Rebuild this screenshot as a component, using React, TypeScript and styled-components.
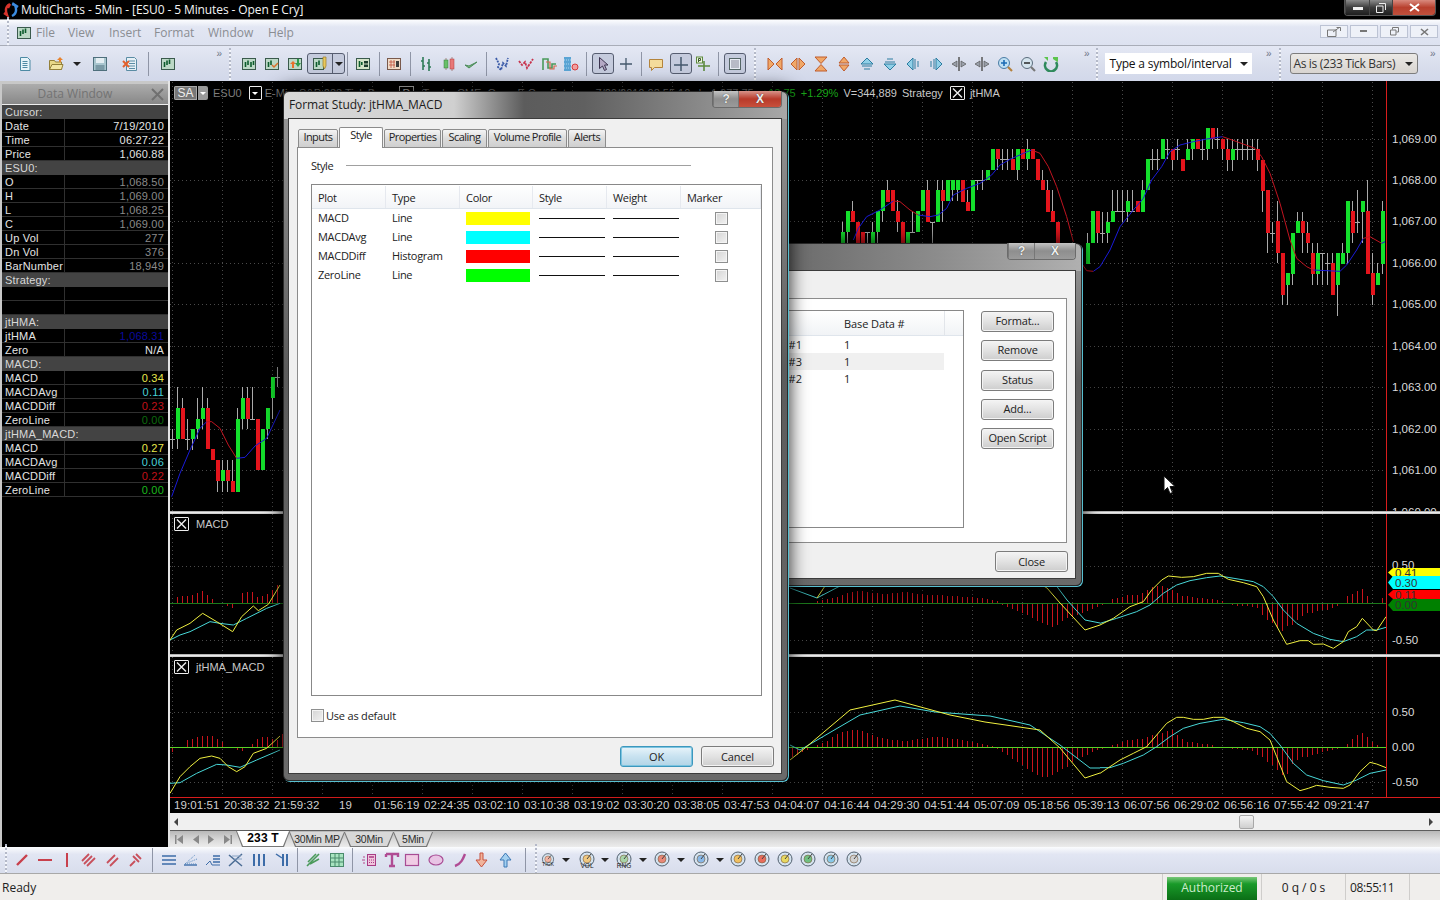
import { FC, ReactNode } from "react";
import styled, { createGlobalStyle } from "styled-components";

const UI_FONT = '"Open Sans", "Noto Sans", sans-serif';
const CHART_FONT = '"Liberation Sans", Arial, sans-serif';

const GlobalStyle = createGlobalStyle`
  html, body { margin: 0; padding: 0; background: #000; }
  * { box-sizing: border-box; }
`;

// App frame
const Page = styled.div`
  position: relative;
  width: 1440px;
  height: 900px;
  overflow: hidden;
  display: flex;
  flex-direction: column;
  font-family: ${UI_FONT};
  background: #000;
`;

const TitleBar = styled.div`
  height: 20px;
  flex: none;
  display: flex;
  align-items: flex-start;
  background: #000;
  border-bottom: 1px solid #8a8a8a;
  box-shadow: inset 0 -1px 0 #000;
`;

const AppLogo = styled.svg`
  width: 16px;
  height: 16px;
  margin: 2px 2px 0 3px;
`;

const TitleText = styled.div`
  color: #f4f4f4;
  font-size: 12px;
  line-height: 19px;
  letter-spacing: -0.1px;
`;

const WinButtons = styled.div`
  margin-left: auto;
  margin-right: 4px;
  display: flex;
  height: 16px;
  border: 1px solid #555;
  border-top: 0;
  border-radius: 0 0 4px 4px;
  overflow: hidden;
`;

const WinButton = styled.div<{ $w: number; $close?: boolean }>`
  width: ${(p) => p.$w}px;
  display: flex;
  align-items: center;
  justify-content: center;
  border-left: 1px solid #444;
  background: ${(p) =>
    p.$close
      ? "linear-gradient(#d98a7e, #b8402e 50%, #c0503c)"
      : "linear-gradient(#8c8c8c, #3c3c3c 50%, #1e1e1e)"};
`;

const MenuBar = styled.div`
  height: 26px;
  flex: none;
  display: flex;
  align-items: center;
  padding-left: 4px;
  background: linear-gradient(#fbfcfe 0, #e2e6f3 28%, #dde2f0 100%);
  border-bottom: 1px solid #a9adb8;
`;

const MenuItem = styled.span<{ $w: number }>`
  width: ${(p) => p.$w}px;
  color: #8a8d92;
  font-size: 12px;
`;

const MdiButtons = styled.div`
  margin-left: auto;
  margin-right: 2px;
  display: flex;
  gap: 2px;
  margin-top: -2px;
`;

const MdiButton = styled.div`
  width: 28px;
  height: 13px;
  background: #eef1f8;
  border: 1px solid #bcc3d4;
  display: flex;
  align-items: center;
  justify-content: center;
`;

const ToolBar = styled.div<{ $h: number; $start?: number; $glow?: boolean }>`
  height: ${(p) => p.$h}px;
  flex: none;
  display: flex;
  align-items: center;
  padding-left: ${(p) => p.$start ?? 0}px;
  background: ${(p) =>
    p.$glow
      ? "linear-gradient(#fbfcfe, #e2e6f3 28%, #d8ddec)"
      : "linear-gradient(#e4e8f4, #d8ddec 60%, #d2d8ea)"};
`;

const Slot = styled.div<{ $w: number; $on?: boolean }>`
  width: ${(p) => p.$w}px;
  height: 24px;
  flex: none;
  display: flex;
  align-items: center;
  justify-content: center;
`;

const ActiveBox = styled.div<{ $w: number }>`
  width: ${(p) => p.$w}px;
  height: 21px;
  margin-left: auto;
  display: flex;
  align-items: center;
  justify-content: center;
  background: #c5cbdd;
  border: 1px solid #565d70;
  border-radius: 3px;
`;

const SplitPart = styled.div`
  height: 100%;
  width: 12px;
  flex: none;
  display: flex;
  align-items: center;
  justify-content: center;
  border-left: 1px solid #565d70;
`;

const SplitMain = styled.div`
  flex: 1;
  display: flex;
  align-items: center;
  justify-content: center;
`;

const SepLine = styled.div`
  width: 1px;
  height: 24px;
  background: #8f95a6;
`;

const Grip = styled.div`
  width: 2px;
  height: 32px;
  background: repeating-linear-gradient(#b4b9c8 0 2px, #f4f6fb 2px 4px);
`;

const DownArrow = styled.div`
  width: 0;
  height: 0;
  border-left: 4px solid transparent;
  border-right: 4px solid transparent;
  border-top: 4px solid #222;
`;

const More = styled.div<{ $w: number }>`
  width: ${(p) => p.$w}px;
  flex: none;
  align-self: flex-start;
  padding-top: 2px;
  text-align: right;
  color: #6d7486;
  font-size: 10px;
  line-height: 12px;
  font-family: ${CHART_FONT};
`;

const ComboBox = styled.div<{ $w: number; $gray?: boolean }>`
  width: ${(p) => p.$w}px;
  height: 21px;
  flex: none;
  margin-left: ${(p) => (p.$gray ? 2 : 0)}px;
  display: flex;
  align-items: center;
  justify-content: space-between;
  padding: 0 4px 0 ${(p) => (p.$gray ? 3 : 5)}px;
  font-size: 12px;
  letter-spacing: ${(p) => (p.$gray ? -0.35 : -0.2)}px;
  color: ${(p) => (p.$gray ? "#333" : "#111")};
  background: ${(p) => (p.$gray ? "linear-gradient(#ebe9e6, #d8d4d0)" : "#fff")};
  border: ${(p) => (p.$gray ? "1px solid #7d7d7d" : "0")};
  border-radius: ${(p) => (p.$gray ? 3 : 0)}px;
`;

const Main = styled.div`
  height: 766px;
  flex: none;
  display: flex;
`;

// Data window
const DataWindow = styled.div`
  width: 170px;
  flex: none;
  display: flex;
  flex-direction: column;
  background: #000;
  border-left: 2px solid #c8c8c8;
  border-right: 2px solid #e4e4e4;
  box-shadow: inset 0 3px 0 #c8c8c8;
`;

const DataTitle = styled.div`
  height: 21px;
  margin-top: 3px;
  flex: none;
  position: relative;
  display: flex;
  align-items: center;
  justify-content: center;
  padding: 0 20px 2px 0;
  color: #737373;
  font-size: 12px;
  background: linear-gradient(#acacac, #888);
  border-bottom: 1px solid #eee;
`;

const DataClose = styled.svg`
  position: absolute;
  right: 4px;
  top: 4px;
  width: 13px;
  height: 13px;
`;

const DataRow = styled.div<{ $head?: boolean }>`
  height: 14px;
  flex: none;
  display: grid;
  grid-template-columns: 63px 1fr;
  font-family: ${CHART_FONT};
  font-size: 11px;
  line-height: 14px;
  color: ${(p) => (p.$head ? "#d8d8d8" : "#e4e4e4")};
  background: ${(p) => (p.$head ? "#434343" : "#000")};
  border-bottom: 1px solid ${(p) => (p.$head ? "#434343" : "#303030")};
  letter-spacing: 0.2px;
`;

const DataLabel = styled.div<{ $head?: boolean }>`
  padding-left: 3px;
  white-space: nowrap;
  border-right: ${(p) => (p.$head ? "0" : "1px solid #303030")};
`;

const DataValue = styled.div<{ $color?: string }>`
  text-align: right;
  padding-right: 4px;
  color: ${(p) => p.$color ?? "#e4e4e4"};
`;

// Chart column
const ChartColumn = styled.div`
  width: 1270px;
  flex: none;
  display: flex;
  flex-direction: column;
`;

const Pane = styled.div<{ $h: number }>`
  position: relative;
  height: ${(p) => p.$h}px;
  flex: none;
  background: #000;
`;

const PaneSvg = styled.svg`
  display: block;
  width: 100%;
  height: 100%;
  font-family: ${CHART_FONT};
  font-size: 11.5px;
`;

const Divider = styled.div`
  height: 3px;
  flex: none;
  background: linear-gradient(#8a8a8a, #efefef 40%, #c8c8c8);
`;

const PaneHeader = styled.div<{ $top: number; $gap?: number }>`
  position: absolute;
  left: 4px;
  top: ${(p) => p.$top}px;
  display: flex;
  align-items: center;
  gap: ${(p) => p.$gap ?? 7}px;
  color: #c8c8c8;
  font-family: ${CHART_FONT};
  font-size: 11px;
  white-space: nowrap;
`;

const CloseBox = styled.div`
  width: 15px;
  height: 14px;
  flex: none;
  border: 1px solid #eee;
  border-radius: 1px;
  display: flex;
  align-items: center;
  justify-content: center;
`;

const SmallBox = styled(CloseBox)`
  width: 13px;
  margin-left: 2px;
  margin-right: -2px;
`;

const StudyBox = styled(CloseBox)`
  margin-left: 2px;
`;

const SaBox = styled.div`
  display: flex;
  height: 14px;
  border-radius: 2px;
  overflow: hidden;
  color: #eee;
  font-size: 12px;
  line-height: 13px;
`;

const SaText = styled.div`
  width: 23px;
  text-align: center;
  background: #777;
  border: 1px solid #aaa;
`;

const SaDrop = styled.div`
  width: 10px;
  background: #999;
  display: flex;
  align-items: center;
  justify-content: center;
  margin-left: 1px;
`;

const MiniArrow = styled.div<{ $c?: string }>`
  width: 0;
  height: 0;
  border-left: 3px solid transparent;
  border-right: 3px solid transparent;
  border-top: 3px solid ${(p) => p.$c ?? "#fff"};
`;

const HeaderHidden = styled.div`
  width: 531px;
  flex: none;
  display: flex;
  align-items: center;
  justify-content: space-between;
  color: #7d7d7d;
`;

const HeaderTag = styled.span`
  border: 1px solid #bbb;
  padding: 0 3px;
  color: #ccc;
`;

const HeaderRight = styled.div`
  display: flex;
  align-items: center;
  gap: 5px;
`;

const HeaderMuted = styled.span`
  color: #7d7d7d;
`;

const HeaderGreen = styled.span`
  color: #19a519;
`;

const TimeAxis = styled.div`
  height: 16px;
  flex: none;
  display: flex;
  padding-left: 4px;
  background: #000;
  border-top: 1px solid #d81c1c;
  color: #d0d0d0;
  font-family: ${CHART_FONT};
  font-size: 11.5px;
  line-height: 15px;
  letter-spacing: 0.1px;
`;

const TimeLabel = styled.div<{ $pad?: boolean }>`
  width: 50px;
  flex: none;
  white-space: nowrap;
  padding-left: ${(p) => (p.$pad ? 15 : 0)}px;
`;

const ScrollBar = styled.div`
  height: 17px;
  flex: none;
  display: flex;
  align-items: center;
  padding-left: 4px;
  background: #f0f0f0;
`;

const ScrollArrow = styled.div<{ $right?: boolean }>`
  width: 0;
  height: 0;
  border-top: 4px solid transparent;
  border-bottom: 4px solid transparent;
  ${(p) =>
    p.$right
      ? "border-left: 4px solid #444; margin-left: 175px;"
      : "border-right: 4px solid #444;"}
`;

const ScrollThumb = styled.div`
  width: 15px;
  height: 14px;
  margin-left: 1061px;
  background: linear-gradient(#f4f4f4, #cfcfcf);
  border: 1px solid #a8a8a8;
  border-radius: 2px;
`;

const TabStrip = styled.div`
  height: 17px;
  flex: none;
  display: flex;
  align-items: flex-end;
  padding-left: 5px;
  background: linear-gradient(#b8b8b8, #dcdcdc 60%, #ececec);
  border-top: 1px solid #5d5d5d;
`;

const TabNav = styled.div`
  width: 61px;
  height: 15px;
  flex: none;
  display: flex;
  align-items: center;
  gap: 9.5px;
`;

const SheetTab = styled.div<{ $w: number; $active?: boolean }>`
  position: relative;
  width: ${(p) => p.$w}px;
  height: ${(p) => (p.$active ? 16 : 15)}px;
  flex: none;
  margin-right: -1px;
  text-align: center;
  font-family: ${CHART_FONT};
  font-size: ${(p) => (p.$active ? 12 : 10.5)}px;
  line-height: 15px;
  letter-spacing: ${(p) => (p.$active ? 0.2 : -0.2)}px;
  color: ${(p) => (p.$active ? "#000" : "#2c2c2c")};
  font-weight: ${(p) => (p.$active ? 700 : 400)};
  &::before {
    content: "";
    position: absolute;
    inset: 0;
    z-index: 0;
    background: #777;
    clip-path: polygon(0 0, 100% 0, calc(100% - 6px) 100%, 6px 100%);
  }
  &::after {
    content: "";
    position: absolute;
    inset: 0 1px 1px 1px;
    z-index: 0;
    background: ${(p) => (p.$active ? "#fff" : "#d8d8d8")};
    clip-path: polygon(0 0, 100% 0, calc(100% - 6px) 100%, 6px 100%);
  }
`;

const SheetTabText = styled.span`
  position: relative;
  z-index: 1;
`;

const StatusBar = styled.div`
  height: 27px;
  flex: none;
  display: flex;
  align-items: center;
  padding-left: 2px;
  background: #f0eeec;
  border-top: 1px solid #a8a8a8;
  font-size: 12px;
  color: #222;
`;

const StatusReady = styled.div`
  flex: 1;
`;

const StatusCell = styled.div<{ $w: number; $tight?: boolean }>`
  width: ${(p) => p.$w}px;
  height: 100%;
  flex: none;
  display: flex;
  align-items: center;
  justify-content: ${(p) => (p.$tight ? "flex-start" : "center")};
  padding-left: ${(p) => (p.$tight ? 4 : 0)}px;
  letter-spacing: ${(p) => (p.$tight ? -0.4 : 0)}px;
  border-left: 1px solid #cfcdcb;
`;

const Authorized = styled.div`
  width: 90px;
  height: 23px;
  flex: none;
  margin: 2px 4px 0 4px;
  text-align: center;
  line-height: 21px;
  color: #cdeccd;
  background: linear-gradient(#79c779, #199a29 30%, #0b6e16);
`;

// Dialogs
const DialogFrame = styled.div<{ $left: number; $top: number; $w: number; $h: number; $title: string }>`
  position: absolute;
  left: ${(p) => p.$left}px;
  top: ${(p) => p.$top}px;
  width: ${(p) => p.$w}px;
  height: ${(p) => p.$h}px;
  display: flex;
  flex-direction: column;
  padding: 0 5px 6px 4px;
  border-radius: 6px;
  background: ${(p) => p.$title}, linear-gradient(#9a9a9a, #5c5c5c 40%, #6a6a6a);
  background-size: 100% 27px, 100% 100%;
  background-repeat: no-repeat;
  border: 1px solid #2a2a2a;
  box-shadow: 1px 1px 0 #58bfd0, 0 0 18px 2px rgba(0, 0, 0, 0.8);
`;

const DialogTitle = styled.div`
  height: 26px;
  flex: none;
  position: relative;
  display: flex;
  align-items: center;
  padding: 0 0 2px 1px;
  color: #1c1c1c;
  font-size: 12px;
  letter-spacing: -0.1px;
  white-space: nowrap;
`;

const CaptionButtons = styled.div`
  position: absolute;
  right: 0;
  top: -1px;
  display: flex;
  height: 17px;
  border: 1px solid #6b6b6b;
  border-top: 0;
  border-radius: 0 0 4px 4px;
  overflow: hidden;
`;

const CaptionButton = styled.div<{ $red?: boolean; $w: number }>`
  width: ${(p) => p.$w}px;
  display: flex;
  align-items: center;
  justify-content: center;
  font-family: ${CHART_FONT};
  font-size: 12px;
  font-weight: 700;
  color: #eee;
  text-shadow: 0 0 1px #333;
  border-left: 1px solid #777;
  background: ${(p) =>
    p.$red ? "linear-gradient(#d8948a, #b83a2a 50%, #c8503c)" : "linear-gradient(#c4c4c4, #8e8e8e 50%, #9a9a9a)"};
`;

const DialogClient = styled.div`
  flex: 1;
  display: flex;
  flex-direction: column;
  min-height: 0;
  background: #f0f0f0;
  border: 1px solid #3c3c3c;
  padding: 8px 8px 0 8px;
`;

const TabRow = styled.div`
  height: 21px;
  flex: none;
  display: flex;
  align-items: flex-end;
  padding-left: 1px;
  margin-bottom: -1px;
  z-index: 1;
`;

const DialogTab = styled.div<{ $w: number; $active?: boolean }>`
  width: ${(p) => p.$w}px;
  height: ${(p) => (p.$active ? 21 : 19)}px;
  flex: none;
  margin-right: 1px;
  text-align: center;
  font-size: 11px;
  letter-spacing: -0.55px;
  line-height: 14px;
  color: #222;
  background: ${(p) => (p.$active ? "#fff" : "linear-gradient(#f4f4f4, #dcdcdc 50%, #cfcfcf)")};
  border: 1px solid #8c8c8c;
  border-bottom: ${(p) => (p.$active ? "0" : "1px solid #8c8c8c")};
  border-radius: 2px 2px 0 0;
`;

const TabPanel = styled.div`
  height: 591px;
  flex: none;
  padding: 9px 10px 0 13px;
  background: #fff;
  border: 1px solid #8c8c8c;
  display: flex;
  flex-direction: column;
`;

const GroupHead = styled.div`
  height: 18px;
  flex: none;
  margin-bottom: 9px;
  padding-bottom: 1px;
  display: flex;
  align-items: center;
  font-size: 11px;
  letter-spacing: -0.45px;
  color: #222;
`;

const GroupLine = styled.div`
  width: 345px;
  height: 1px;
  margin-left: 13px;
  background: #a0a0a0;
`;

const PlotTable = styled.div`
  height: 512px;
  flex: none;
  border: 1px solid #888;
  background: #fff;
`;

const PlotRow = styled.div<{ $head?: boolean }>`
  height: ${(p) => (p.$head ? 24 : 19)}px;
  display: grid;
  grid-template-columns: 74px 74px 73px 74px 74px 1fr;
  align-items: center;
  font-size: 11px;
  letter-spacing: -0.3px;
  color: #222;
  ${(p) =>
    p.$head &&
    "background: linear-gradient(#fff, #f2f4f7); border-bottom: 1px solid #dfe5ec; padding-top: 1px;"}
`;

const PlotHead = styled.div`
  height: 100%;
  display: flex;
  align-items: center;
  padding-left: 6px;
  border-right: 1px solid #e6e9ef;
`;

const PlotCell = styled.div<{ $text?: boolean }>`
  display: flex;
  align-items: center;
  padding: 0 0 ${(p) => (p.$text ? 2 : 0)}px 6px;
`;

const Swatch = styled.div<{ $color: string }>`
  width: 64px;
  height: 13px;
  background: ${(p) => p.$color};
`;

const LineSample = styled.div`
  width: 66px;
  height: 1px;
  background: #111;
`;

const CheckBox = styled.div<{ $margin?: number }>`
  width: 13px;
  height: 13px;
  flex: none;
  margin-left: ${(p) => p.$margin ?? 0}px;
  border: 1px solid #8e8f8f;
  background: linear-gradient(135deg, #d4d4d4, #f2f2f2);
  box-shadow: inset 0 0 0 1px #f4f4f4;
`;

const DefaultRow = styled.div`
  margin-top: 12px;
  display: flex;
  align-items: center;
  gap: 2px;
  font-size: 11px;
  letter-spacing: -0.2px;
  color: #222;
`;

const FooterRow = styled.div`
  flex: 1;
  display: flex;
  align-items: flex-start;
  justify-content: flex-end;
  gap: 8px;
  padding-top: 8px;
  margin-right: -1px;
`;

const PushButton = styled.div<{ $primary?: boolean }>`
  width: 73px;
  height: 21px;
  flex: none;
  text-align: center;
  font-size: 11px;
  letter-spacing: -0.2px;
  line-height: 18px;
  color: #222;
  border-radius: 3px;
  border: 1px solid ${(p) => (p.$primary ? "#3c97bd" : "#7c7c7c")};
  background: ${(p) =>
    p.$primary ? "linear-gradient(#e8f4fa, #c8e2f0 50%, #b2d4e6)" : "linear-gradient(#f4f4f4, #e2e2e2 50%, #cdcdcd)"};
  box-shadow: ${(p) => (p.$primary ? "inset 0 0 0 1px #7cc4e0" : "inset 0 0 0 1px #f4f4f4")};
`;

const FooterButton = styled(PushButton)`
  line-height: 20px;
`;

const StudyPanel = styled.div`
  height: 245px;
  flex: none;
  margin-top: 19px;
  padding: 11px 12px 0 0;
  display: flex;
  justify-content: flex-end;
  gap: 17px;
  background: #fff;
  border: 1px solid #8c8c8c;
`;

const StudyList = styled.div`
  width: 320px;
  height: 218px;
  flex: none;
  border: 1px solid #888;
  border-left: 0;
`;

const StudyHead = styled.div`
  position: relative;
  height: 25px;
  display: flex;
  align-items: center;
  padding-left: 200px;
  font-size: 11px;
  letter-spacing: -0.1px;
  background: linear-gradient(#fff, #f1f3f6);
  border-bottom: 1px solid #dfe5ec;
  color: #222;
  &::after {
    content: "";
    position: absolute;
    left: 300px;
    top: 0;
    bottom: 0;
    width: 1px;
    background: #e2e5ea;
  }
`;

const StudyRow = styled.div<{ $hl?: boolean }>`
  height: 17px;
  width: 300px;
  display: flex;
  align-items: center;
  font-size: 11px;
  color: #222;
  background: ${(p) => (p.$hl ? "#f0f0f0" : "#fff")};
`;

const StudyMark = styled.div`
  width: 200px;
  text-align: right;
  padding-right: 42px;
`;

const StudyButtons = styled.div`
  display: flex;
  flex-direction: column;
  margin-top: 1px;
  gap: 8.25px;
`;

const CursorSvg = styled.svg`
  position: absolute;
  left: 1163px;
  top: 475px;
  width: 13px;
  height: 20px;
`;

// Toolbar icons, 16x16 drawings
const box = (extra: ReactNode) => (
  <>
    <rect x="1.5" y="2.5" width="13" height="11" fill="#bcd8c6" stroke="#3a5a4c" />
    <path d="M4.5 11V6M7 9V4.5" stroke="#0c5c2c" strokeWidth="1.6" />
    {extra}
  </>
);

const ICONS: Record<string, ReactNode> = {
  doc: (
    <>
      <path d="M3.5 1.5h7l2.5 2.5v10.500H3.500z" fill="#e6f4fa" stroke="#4d8aa4" />
      <path d="M5.500 5.500h5M5.500 7.500h5M5.500 9.500h5M5.500 11.500h5" stroke="#4d8aa4" />
    </>
  ),
  folder: (
    <>
      <path d="M1.500 4.500h5l1 1.500h6v7.500h-12z" fill="#e8d888" stroke="#93803a" />
      <path d="M1.500 13.500l2.500-5h11l-1.500 5z" fill="#f2e6a4" stroke="#93803a" />
      <path d="M9 4l3-3 3 3h-2v2h-2V4z" fill="#e8822c" />
    </>
  ),
  save: (
    <>
      <rect x="1.500" y="1.500" width="13" height="13" fill="#a9c6cf" stroke="#4e6f7c" />
      <rect x="4" y="2" width="8" height="5" fill="#e4eef2" />
      <rect x="3.500" y="9" width="9" height="5" fill="#7b9aa6" />
    </>
  ),
  xdoc: (
    <>
      <path d="M4.500 1.500h8l2 2v11h-10z" fill="#e6f0f6" stroke="#5a8ca4" />
      <path d="M7 5h6M7 7.500h6M7 10h6M7 12.500h6" stroke="#5a8ca4" />
      <path d="M1 5l6 6M7 5l-6 6" stroke="#e2602c" strokeWidth="2" />
    </>
  ),
  win: box(<path d="M9.500 8V3.500" stroke="#0c5c2c" strokeWidth="1.600" />),
  win2: box(<path d="M10 11V6M12.500 9V5" stroke="#0c5c2c" strokeWidth="1.600" />),
  winCheck: box(<path d="M8 9l2 2 4-4" fill="none" stroke="#d8702c" strokeWidth="1.500" />),
  winArrow: (
    <>
      <rect x="1.500" y="2.500" width="13" height="11" fill="#bcd8c6" stroke="#3a5a4c" />
      <path d="M3 8l3-3 3 3H7v4H5V8z" fill="#e8702c" />
      <path d="M8 7h2V3h2v4h2l-3 4z" fill="#2c9c4c" />
    </>
  ),
  winPen: (
    <>
      <rect x="1.500" y="2.500" width="10" height="11" fill="#bcd8c6" stroke="#3a5a4c" />
      <path d="M4.500 11V6M7 9V4.500" stroke="#0c5c2c" strokeWidth="1.600" />
      <path d="M11 1h3v9l-1.500 3L11 10z" fill="#e8c85c" stroke="#9a7c2c" strokeWidth="0.700" />
    </>
  ),
  winGrid: (
    <>
      <rect x="1.500" y="2.500" width="13" height="11" fill="#d4e4c8" stroke="#3a5a4c" />
      <path d="M4.500 11V5M6.800 9V6" stroke="#0c5c2c" strokeWidth="1.600" />
      <rect x="9" y="5" width="4" height="6" fill="#1c3c2c" />
      <path d="M9 8h4" stroke="#d4e4c8" />
    </>
  ),
  table: (
    <>
      <rect x="1.500" y="2.500" width="13" height="11" fill="#f0dcc8" stroke="#7a5a4c" />
      <path d="M3 6h6M3 9h6M5 4v8M8 4v8" stroke="#c0503c" strokeWidth="0.800" />
      <rect x="10" y="5" width="3" height="6" fill="#3c3c3c" />
    </>
  ),
  bars: (
    <path d="M5 1v13M3 5h2M5 10h2M11 3v12M9 7h2M11 11h2" fill="none" stroke="#2f7c58" strokeWidth="1.600" />
  ),
  candles: (
    <>
      <path d="M5 2v12M11 1v14" stroke="#a88" />
      <rect x="3" y="4" width="4" height="8" fill="#68c068" stroke="#3a7a3a" strokeWidth="0.500" />
      <rect x="9" y="3" width="4" height="10" fill="#e87878" stroke="#b03c3c" strokeWidth="0.500" />
    </>
  ),
  check: <path d="M2 9l4 3 8-6-8 4z" fill="#7cba7c" stroke="#4a8a5a" />,
  vSquig: (
    <path d="M2 2l3 6-1 3 3 3 2-7 3 3 2-8" fill="none" stroke="#3a5aa8" strokeWidth="1.800" strokeDasharray="2 1" />
  ),
  zig: <path d="M1 5l3 4 3-3 2 6 6-9" fill="none" stroke="#c8324c" strokeWidth="1.800" strokeDasharray="2.500 1" />,
  step: (
    <>
      <path d="M2 14V3h5v9h4V8h4" fill="none" stroke="#4a9a5a" strokeWidth="1.600" />
      <path d="M5 6h4v7h4v-3h3" fill="none" stroke="#d86a4c" strokeWidth="1.200" />
    </>
  ),
  hatch: (
    <>
      <rect x="1" y="1" width="7" height="14" fill="#5aa4d4" />
      <path d="M1 4h7M1 8h7M1 12h7" stroke="#b0d8f0" strokeDasharray="1 1" />
      <circle cx="12" cy="11" r="3" fill="#f0a0a0" stroke="#d83c3c" />
    </>
  ),
  arrow: <path d="M4.500 1.500v11l3-2.500 2 4.500 2-1-2-4.500h3.500z" fill="#b4a8c4" stroke="#3c3450" />,
  cross: <path d="M8 2v12M2 8h12" stroke="#44586c" strokeWidth="1.300" />,
  bubble: (
    <path d="M1.500 3.500h13v8h-8l-3 3v-3h-2z" fill="#f4dc9c" stroke="#b4843c" />
  ),
  bigCross: <path d="M8 1v14M1 9h14" stroke="#44586c" strokeWidth="1.500" />,
  pCross: (
    <>
      <path d="M9 5v10M3 10h12" stroke="#5c8a3c" strokeWidth="1.600" />
      <rect x="1.500" y="1" width="6" height="6" fill="#eef4e0" stroke="#5c8a3c" />
      <path d="M3.500 6V2.500h2v2h-2" fill="none" stroke="#3c5c2c" />
    </>
  ),
  list: (
    <>
      <rect x="2.500" y="2.500" width="11" height="11" fill="#e8ecf4" stroke="#566" />
      <path d="M4 5h8M4 7h8M4 9h8M4 11h8" stroke="#889" />
    </>
  ),
  triIn: (
    <>
      <path d="M1 2l6 6-6 6zM15 2l-6 6 6 6z" fill="#f0a868" stroke="#c05c2c" />
    </>
  ),
  triOut: <path d="M7 2L1 8l6 6zM9 2l6 6-6 6z" fill="#f0a868" stroke="#c05c2c" />,
  triV: (
    <path d="M2 1h12l-6 6.500zM2 15h12l-6-6.500z" fill="#f0a868" stroke="#c05c2c" />
  ),
  triV2: (
    <path d="M8 1l5 6H3zM8 15l5-6H3z" fill="#f0a868" stroke="#c05c2c" />
  ),
  upLine: (
    <>
      <path d="M8 2l6 6H2z" fill="#90d0e8" stroke="#2c7ca0" />
      <path d="M3 10h10M5 13h6" stroke="#2c7ca0" />
    </>
  ),
  downLine: (
    <>
      <path d="M8 14l6-6H2z" fill="#90d0e8" stroke="#2c7ca0" />
      <path d="M3 6h10M5 3h6" stroke="#2c7ca0" />
    </>
  ),
  leftLine: (
    <>
      <path d="M2 8l6-6v12z" fill="#90d0e8" stroke="#2c7ca0" />
      <path d="M10 3v10M13 5v6" stroke="#2c7ca0" />
    </>
  ),
  rightLine: (
    <>
      <path d="M14 8L8 2v12z" fill="#90d0e8" stroke="#2c7ca0" />
      <path d="M6 3v10M3 5v6" stroke="#2c7ca0" />
    </>
  ),
  grayL: (
    <>
      <path d="M8 1v14" stroke="#555" strokeWidth="1.500" />
      <path d="M1 8l5-3v6zM15 8l-5-3v6z" fill="#9aa0aa" stroke="#555" strokeWidth="0.700" />
    </>
  ),
  zoomIn: (
    <>
      <circle cx="7" cy="7" r="5.500" fill="#bfe0f4" stroke="#4a7ca4" />
      <path d="M4 7h6M7 4v6" stroke="#1c6cb4" strokeWidth="1.600" />
      <path d="M11 11l4 4" stroke="#b4803c" strokeWidth="2.200" />
    </>
  ),
  zoomOut: (
    <>
      <circle cx="7" cy="7" r="5.500" fill="#d4e4ee" stroke="#5a6c7c" />
      <path d="M4 7h6" stroke="#333" strokeWidth="1.600" />
      <path d="M11 11l4 4" stroke="#777" strokeWidth="2.200" />
    </>
  ),
  refresh: (
    <>
      <path d="M3 6a6 6 0 1 0 10 0" fill="none" stroke="#2f8a5c" strokeWidth="2.600" />
      <path d="M1 1h4v4zM10 1h5v5l-2-1-3-2z" fill="#5cc44c" />
    </>
  ),
  trend: <path d="M3 13l10-10" stroke="#c8404c" strokeWidth="2.400" />,
  hline: <path d="M1 8h14" stroke="#c8404c" strokeWidth="2" />,
  vline: <path d="M8 1v14" stroke="#c8404c" strokeWidth="2" />,
  par3: <path d="M1 9l7-7M3 12l8-8M6 14l8-8" stroke="#c8505c" strokeWidth="1.800" />,
  par2: <path d="M3 11l8-8M6 14l8-8" stroke="#c8505c" strokeWidth="1.800" />,
  fork: (
    <>
      <path d="M3 14l5-5M6 4l6 6M9 2l5 5" stroke="#c8505c" strokeWidth="1.800" />
    </>
  ),
  lines: <path d="M1 4h14M1 8h14M1 12h14" stroke="#3c6ca8" strokeWidth="1.600" />,
  fan: (
    <>
      <path d="M2 13h13" stroke="#3c6ca8" strokeWidth="1.400" />
      <path d="M3 12l10-9M3 12l12-5M3 12h12" stroke="#5c8cc0" strokeDasharray="1 1" />
    </>
  ),
  angle: (
    <>
      <path d="M1 13l4-4 2 4h8" fill="none" stroke="#3c6ca8" />
      <path d="M8 4h7M8 7h7M8 10h7" stroke="#3c6ca8" strokeWidth="1.300" />
    </>
  ),
  cross2: (
    <>
      <path d="M1 14L14 2M1 3l13 11" stroke="#4a6c94" strokeWidth="1.500" />
      <path d="M4 4h9M6 7h8" stroke="#8aa4c4" />
    </>
  ),
  cols: <path d="M3 2v12M8 2v12M13 2v12" stroke="#3c6ca8" strokeWidth="2" />,
  cols2: (
    <>
      <path d="M2 2l6 4" stroke="#3c6ca8" strokeWidth="1.500" />
      <path d="M9 2v12M13 2v12" stroke="#3c6ca8" strokeWidth="2" />
    </>
  ),
  feather: (
    <>
      <path d="M2 14L14 2M5 12l9-5M3 10l8-8" stroke="#4a9a5a" strokeWidth="1.600" />
    </>
  ),
  greenGrid: (
    <>
      <rect x="1.500" y="1.500" width="13" height="13" fill="#a8e4c0" stroke="#4a8a6c" />
      <path d="M6 2v12M10 2v12M2 6h12M2 10h12" stroke="#4a8a6c" />
    </>
  ),
  calc: (
    <>
      <rect x="6.500" y="2.500" width="8" height="11" fill="#f0c4dc" stroke="#a83c84" />
      <path d="M8 5h5" stroke="#a83c84" strokeWidth="1.500" />
      <path d="M8 8h1M10 8h1M12 8h1M8 10.500h1M10 10.500h1M12 10.500h1" stroke="#a83c84" />
      <path d="M2 5h2M1 8h3M2 11h2" stroke="#c47cac" strokeWidth="1.400" />
    </>
  ),
  letterT: <path d="M2 2h12v3M2 5V2M8 2v12M5 14h6" fill="none" stroke="#b04c94" strokeWidth="2.400" />,
  rect: <rect x="1.500" y="2.500" width="13" height="11" fill="#f0cce4" stroke="#a84c94" strokeWidth="1.200" />,
  ellipse: <ellipse cx="8" cy="8" rx="7" ry="5" fill="#e8c4e4" stroke="#a84c94" strokeWidth="1.200" />,
  curve: <path d="M3 14C9 12 11 7 13 2" fill="none" stroke="#b04c94" strokeWidth="2.400" />,
  arrowDown: <path d="M6 1h3v7h4l-5.500 7L2 8h4z" fill="#f0b49c" stroke="#c8503c" />,
  arrowUp: <path d="M6 15h3V8h4L7.500 1 2 8h4z" fill="#a4d0f0" stroke="#3c78b4" />,
};

const Icon: FC<{ name: string; size?: number }> = ({ name, size = 16 }) => (
  <svg width={size} height={size} viewBox="0 0 16 16">
    {ICONS[name]}
  </svg>
);

const RoundIcon: FC<{ label?: string; color: string }> = ({ label, color }) => (
  <svg width="20" height="20" viewBox="0 0 20 20">
    <circle cx="10" cy="9" r="7" fill="#d4e2ee" stroke="#52606e" />
    <circle cx="10" cy="9" r="4" fill={color} stroke="#7c5c3c" strokeWidth="0.600" />
    <path d="M10 9l4-5" stroke="#444" />
    {label && (
      <text x="10" y="18" textAnchor="middle" fontSize="6.500" fontFamily={CHART_FONT} fill="#222">
        {label}
      </text>
    )}
  </svg>
);

type ToolItem =
  | [string, number]
  | [string, number, "on" | "split"];

const renderTool = (item: ToolItem, i: number) => {
  const [name, w, mode] = item;
  if (name === "sep")
    return (
      <Slot key={i} $w={w}>
        <SepLine />
      </Slot>
    );
  if (name === "grip")
    return (
      <Slot key={i} $w={w}>
        <Grip />
      </Slot>
    );
  if (name === "drop")
    return (
      <Slot key={i} $w={w}>
        <DownArrow />
      </Slot>
    );
  if (name === "more") return <More key={i} $w={w}>&raquo;</More>;
  if (name.startsWith("round:")) {
    const [, color, label] = name.split(":");
    return (
      <Slot key={i} $w={w}>
        <RoundIcon color={color} label={label} />
      </Slot>
    );
  }
  if (mode === "on")
    return (
      <Slot key={i} $w={w}>
        <ActiveBox $w={22}>
          <Icon name={name} />
        </ActiveBox>
      </Slot>
    );
  if (mode === "split")
    return (
      <Slot key={i} $w={w}>
        <ActiveBox $w={w}>
          <SplitMain>
            <Icon name={name} />
          </SplitMain>
          <SplitPart>
            <DownArrow />
          </SplitPart>
        </ActiveBox>
      </Slot>
    );
  return (
    <Slot key={i} $w={w}>
      <Icon name={name} />
    </Slot>
  );
};

const TOP_TOOLS_A: ToolItem[] = [
  ["doc", 30], ["folder", 32], ["drop", 10], ["save", 36], ["xdoc", 24], ["sep", 12], ["win", 28], ["more", 40],
  ["grip", 15], ["win2", 23], ["winCheck", 23], ["winArrow", 24], ["winPen", 38, "split"], ["sep", 5],
  ["winGrid", 26], ["sep", 6], ["table", 24], ["sep", 8], ["bars", 23], ["candles", 23], ["check", 22], ["sep", 8],
  ["vSquig", 24], ["zig", 23], ["step", 23], ["hatch", 22], ["sep", 8], ["arrow", 24, "on"], ["cross", 24],
  ["sep", 6], ["bubble", 24], ["bigCross", 24, "on"], ["pCross", 22], ["sep", 8], ["list", 24, "on"],
  ["grip", 17.5], ["triIn", 23], ["triOut", 23], ["triV", 23], ["triV2", 23], ["upLine", 23], ["downLine", 23],
  ["leftLine", 23], ["rightLine", 23], ["grayL", 23], ["grayL", 23], ["zoomIn", 23], ["zoomOut", 23],
  ["refresh", 23], ["more", 27], ["grip", 15],
];

const BOTTOM_TOOLS: ToolItem[] = [
  ["grip", 11], ["trend", 22], ["hline", 23], ["vline", 22], ["par3", 22], ["par2", 24], ["fork", 22], ["sep", 12],
  ["lines", 21], ["fan", 22], ["angle", 24], ["cross2", 22], ["cols", 23], ["cols2", 24], ["sep", 6],
  ["feather", 26], ["greenGrid", 22], ["sep", 8], ["calc", 26], ["letterT", 20], ["rect", 20], ["ellipse", 28],
  ["curve", 20], ["arrowDown", 24], ["arrowUp", 24], ["sep", 14], ["grip", 8], ["round:#f4b4a4:TICK", 16],
  ["drop", 20], ["round:#f0c880:VOL", 22], ["drop", 14], ["round:#a8d4a8:RNG", 24], ["drop", 14],
  ["round:#e88878", 24], ["drop", 14], ["round:#88b8e8", 26], ["drop", 12], ["round:#f0c060", 24],
  ["round:#e86c5c", 23], ["round:#e8d860", 23], ["round:#70c080", 23], ["round:#88c8e8", 23], ["round:#d0d0d0", 23],
];

// Chart data, read off the picture on a 3x grid and scaled back to page pixels
type Candle = [number, number, number, number, number, "g" | "r" | "d"];
type Pt = [number, number];

const LEFT_CANDLES: Candle[] = [
  [7, 238, 238, 208, 268, "d"], [22, 144, 238, 82, 268, "g"], [37, 144, 238, 114, 238, "r"],
  [52, 238, 238, 176, 270, "d"], [67, 208, 238, 208, 270, "g"], [82, 176, 208, 114, 238, "g"],
  [97, 144, 176, 82, 208, "g"], [112, 144, 268, 114, 268, "r"], [127, 268, 300, 268, 300, "r"],
  [142, 300, 362, 300, 395, "r"], [157, 330, 362, 300, 395, "g"], [172, 330, 362, 300, 395, "r"],
  [187, 362, 395, 300, 395, "r"], [202, 176, 395, 144, 395, "g"], [217, 114, 176, 82, 208, "g"],
  [232, 114, 176, 82, 208, "r"], [247, 176, 176, 82, 176, "d"], [262, 176, 330, 176, 330, "r"],
  [277, 208, 330, 208, 330, "g"], [292, 144, 208, 144, 238, "g"], [307, 52, 114, 52, 176, "g"],
  [322, 50, 50, 20, 80, "d"],
];

const MID_CANDLES: Candle[] = [
  [157, 335, 368, 305, 368, "g"], [172, 273, 335, 273, 368, "g"], [187, 273, 305, 243, 305, "r"],
  [202, 305, 368, 305, 368, "r"], [217, 335, 368, 335, 368, "r"], [232, 335, 335, 335, 368, "d"],
  [247, 335, 368, 305, 368, "g"], [262, 273, 335, 273, 368, "g"], [277, 210, 273, 210, 305, "g"],
  [292, 210, 245, 180, 245, "r"], [307, 210, 273, 210, 273, "r"], [322, 273, 305, 240, 335, "r"],
  [337, 305, 368, 305, 368, "r"], [352, 335, 368, 335, 368, "g"], [367, 335, 335, 273, 335, "d"],
  [382, 273, 335, 273, 335, "g"], [397, 210, 273, 210, 273, "g"], [412, 210, 305, 180, 305, "r"],
  [427, 305, 305, 305, 368, "d"], [442, 210, 305, 180, 305, "g"], [457, 210, 243, 180, 305, "r"],
  [472, 180, 243, 180, 243, "g"], [487, 180, 210, 180, 243, "g"], [502, 180, 210, 180, 243, "g"],
  [517, 180, 245, 180, 245, "r"], [532, 245, 273, 210, 273, "r"], [547, 180, 273, 180, 273, "g"],
  [562, 180, 180, 180, 210, "d"], [577, 180, 180, 150, 210, "d"], [592, 150, 180, 150, 180, "g"],
  [607, 87, 150, 87, 150, "g"], [622, 87, 118, 87, 150, "r"], [637, 118, 118, 87, 150, "d"],
  [652, 118, 118, 87, 150, "d"], [667, 118, 150, 87, 150, "r"], [682, 87, 150, 87, 180, "g"],
  [697, 87, 118, 87, 118, "r"], [712, 87, 118, 57, 150, "g"], [727, 87, 118, 87, 118, "r"],
  [742, 118, 180, 118, 180, "r"], [757, 180, 210, 150, 210, "r"], [772, 210, 275, 180, 275, "r"],
  [787, 273, 305, 210, 305, "r"], [802, 305, 368, 305, 368, "r"], [892, 368, 400, 368, 400, "g"],
];

const RIGHT_CANDLES: Candle[] = [
  [22, 398, 462, 368, 462, "g"], [37, 303, 398, 303, 398, "g"], [52, 303, 368, 303, 398, "r"],
  [67, 368, 368, 305, 398, "d"], [82, 335, 368, 305, 398, "g"], [97, 303, 335, 240, 335, "g"],
  [112, 303, 303, 240, 305, "d"], [127, 303, 303, 240, 335, "d"], [142, 273, 305, 240, 335, "g"],
  [157, 303, 303, 240, 305, "d"], [172, 273, 305, 273, 305, "r"], [187, 240, 305, 210, 305, "g"],
  [202, 148, 240, 148, 240, "g"], [217, 148, 148, 118, 180, "d"], [232, 148, 148, 118, 180, "d"],
  [247, 87, 148, 87, 148, "g"], [262, 118, 118, 87, 148, "d"], [277, 118, 150, 118, 180, "r"],
  [292, 118, 118, 87, 150, "d"], [307, 148, 182, 148, 182, "r"], [322, 118, 150, 87, 150, "g"],
  [337, 87, 118, 87, 150, "g"], [352, 87, 118, 87, 118, "r"], [367, 118, 118, 87, 150, "d"],
  [382, 55, 118, 55, 150, "g"], [397, 55, 87, 55, 118, "r"], [412, 87, 87, 55, 118, "d"],
  [427, 87, 118, 87, 150, "r"], [442, 118, 150, 87, 182, "r"], [457, 118, 150, 87, 182, "g"],
  [472, 118, 118, 87, 150, "d"], [487, 118, 118, 87, 150, "d"], [502, 118, 118, 87, 150, "d"],
  [517, 118, 118, 87, 150, "d"], [532, 118, 150, 87, 182, "r"], [547, 150, 242, 150, 305, "r"],
  [562, 240, 368, 240, 430, "r"], [577, 368, 368, 335, 398, "d"], [592, 333, 430, 273, 460, "r"],
  [607, 430, 555, 430, 585, "r"], [622, 490, 525, 490, 585, "g"], [637, 368, 492, 368, 525, "g"],
  [652, 333, 368, 305, 368, "g"], [667, 333, 368, 305, 430, "r"], [682, 368, 398, 335, 430, "r"],
  [697, 430, 492, 398, 525, "r"], [712, 430, 492, 398, 525, "g"], [727, 430, 430, 430, 525, "d"],
  [742, 460, 460, 430, 525, "d"], [757, 460, 555, 430, 555, "r"], [772, 430, 525, 430, 617, "g"],
  [787, 430, 462, 398, 462, "g"], [802, 273, 430, 273, 462, "g"], [817, 303, 368, 273, 398, "r"],
  [832, 335, 335, 240, 368, "d"], [847, 273, 305, 273, 398, "g"], [862, 303, 492, 210, 492, "r"],
  [877, 490, 555, 430, 585, "r"], [892, 490, 525, 460, 525, "g"], [907, 303, 462, 273, 492, "g"],
];

const at = (ox: number, oy: number, pts: Pt[]): Pt[] => pts.map(([x, y]) => [ox + x / 3, oy + y / 3]);

const HMA_SEGMENTS: { color: string; pts: Pt[] }[] = [
  { color: "#1a1ad8", pts: at(170, 360, [[5, 410], [30, 340], [60, 270], [90, 205], [110, 185]]) },
  { color: "#c01420", pts: at(170, 360, [[110, 185], [125, 185], [150, 205], [175, 255], [200, 295]]) },
  { color: "#1a1ad8", pts: at(170, 360, [[200, 295], [225, 292], [255, 258], [290, 235], [330, 150]]) },
  { color: "#1a1ad8", pts: at(790, 120, [[190, 360], [205, 325], [230, 290], [270, 270], [310, 243]]) },
  { color: "#c01420", pts: at(790, 120, [[310, 243], [330, 245], [360, 270], [385, 285]]) },
  { color: "#1a1ad8", pts: at(790, 120, [[385, 285], [420, 290], [445, 285], [470, 265], [490, 225], [530, 205], [570, 190], [605, 165], [630, 135], [660, 118], [700, 100], [725, 90]]) },
  { color: "#c01420", pts: at(790, 120, [[725, 90], [750, 100], [775, 140], [800, 200], [830, 290], [850, 365]]) },
  { color: "#c01420", pts: at(1080, 110, [[5, 460], [20, 482], [40, 484]]) },
  { color: "#1a1ad8", pts: at(1080, 110, [[40, 484], [60, 470], [90, 420], [120, 350], [160, 300], [190, 265], [215, 210], [245, 170], [270, 125], [300, 105], [340, 95], [380, 87], [428, 80]]) },
  { color: "#c01420", pts: at(1080, 110, [[428, 80], [470, 95], [525, 115], [545, 140], [570, 190], [600, 280], [630, 390], [650, 445], [680, 470], [700, 480]]) },
  { color: "#1a1ad8", pts: at(1080, 110, [[700, 480], [780, 484], [800, 465], [830, 420], [850, 385]]) },
  { color: "#c01420", pts: at(1080, 110, [[850, 385], [870, 380], [905, 400]]) },
  { color: "#1a1ad8", pts: at(1080, 110, [[905, 400], [915, 395]]) },
];

type Bars = { x0: number; step: number; heights: number[] };

const MACD_YELLOW: Pt[][] = [
  at(170, 360, [[0, 840], [20, 810], [60, 790], [98, 760], [140, 785], [188, 815], [215, 770], [250, 738], [265, 752], [295, 733], [330, 675]]),
  [[817, 598], [825, 586]],
  [[1040, 584], [1047, 588], [1060, 603], [1085, 630], [1100, 625]],
  at(1100, 540, [[0, 255], [40, 235], [90, 200], [130, 185], [155, 150], [185, 120], [205, 108], [245, 112], [280, 110], [320, 100], [355, 100], [385, 118], [430, 128], [470, 140], [490, 170], [520, 240], [560, 313], [600, 302], [625, 302], [640, 313], [670, 312], [700, 325], [730, 305], [745, 275], [770, 260], [787, 235], [820, 270], [830, 272], [858, 230]]),
];

const MACD_CYAN: Pt[][] = [
  at(170, 360, [[0, 840], [30, 825], [60, 815], [120, 785], [150, 790], [190, 795], [230, 775], [290, 745], [330, 730]]),
  [[790, 588], [817, 598], [840, 586]],
  [[1055, 584], [1067, 600], [1085, 620], [1100, 623]],
  at(1100, 540, [[0, 250], [50, 235], [110, 215], [150, 195], [190, 160], [230, 135], [270, 122], [320, 113], [360, 108], [420, 118], [460, 125], [490, 140], [520, 170], [550, 210], [590, 250], [640, 280], [690, 298], [730, 305], [770, 290], [800, 270], [830, 270], [858, 262]]),
];

const MACD_BARS: Bars[] = [
  { x0: 177, step: 5, heights: [6, 7, 7, 8, 10, 12, 8, 4, 0, 0, -3, -5, 0, 10, 11, 11, 6, 7, 9, 13, 18] },
  { x0: 792, step: 5, heights: [0, 0, 0, 0, 0, 2, 3, 4, 5, 6, 8, 10, 11, 12, 12, 11, 10, 10, 9, 9, 10, 10, 11, 11, 10, 9, 9, 8, 8, 8, 8, 7, 7, 7, 6, 6, 6, 5, 5, 4, 3, 2, -2, -4, -6, -8, -10, -12, -15, -18, -20, -22, -24, -22, -18, -15, -14, -12, -10, -8, -6, -4] },
  { x0: 1102, step: 5, heights: [-2, 0, 4, 5, 6, 8, 8, 8, 10, 13, 16, 17, 17, 15, 13, 10, 7, 7, 6, 5, 5, 4, 4, 3, 2, 0, -2, -3, -3, -3, -4, -5, -12, -17, -20, -25, -28, -23, -22, -17, -13, -10, -10, -8, -7, -7, -5, -3, 0, 7, 9, 12, 14, 7, 0, 0, 5] },
];

const JT_YELLOW: Pt[][] = [
  at(170, 360, [[0, 1300], [30, 1250], [60, 1220], [90, 1195], [125, 1188], [150, 1195], [175, 1220], [200, 1235], [225, 1220], [250, 1180], [290, 1165], [330, 1128]]),
  [[790, 760], [805, 748], [850, 710], [895, 700], [950, 715], [985, 722], [1040, 730], [1060, 748], [1085, 778], [1100, 773]],
  at(1100, 540, [[0, 700], [30, 680], [60, 660], [100, 640], [140, 620], [170, 585], [200, 550], [230, 532], [250, 532], [280, 538], [310, 538], [340, 532], [370, 532], [400, 545], [440, 565], [480, 575], [510, 600], [530, 650], [560, 725], [600, 752], [625, 745], [650, 736], [690, 742], [730, 745], [750, 735], [780, 695], [810, 667], [830, 672], [858, 683]]),
];

const JT_CYAN: Pt[][] = [
  at(170, 360, [[0, 1270], [30, 1268], [80, 1240], [140, 1213], [170, 1215], [210, 1222], [260, 1200], [330, 1170]]),
  [[790, 745], [800, 750], [860, 715], [900, 706], [935, 712], [990, 716], [1030, 725], [1060, 745], [1090, 768], [1100, 768]],
  at(1100, 540, [[0, 683], [30, 683], [70, 670], [130, 645], [170, 620], [210, 590], [250, 565], [300, 550], [370, 538], [430, 548], [480, 560], [510, 580], [540, 615], [580, 670], [620, 705], [670, 722], [730, 735], [770, 720], [810, 700], [858, 690]]),
];

const JT_BARS: Bars[] = [
  { x0: 172, step: 5, heights: [-5, 0, 0, 7, 8, 10, 11, 11, 11, 8, 5, 0, 0, -3, -4, 0, 3, 8, 10, 10, 8, 7, 13] },
  { x0: 792, step: 5, heights: [-10, -8, -5, -3, 0, 2, 4, 6, 10, 13, 15, 16, 17, 17, 16, 14, 12, 10, 9, 8, 7, 7, 6, 6, 7, 8, 8, 9, 10, 10, 10, 9, 8, 8, 7, 6, 5, 4, 3, 2, 1, -2, -5, -8, -12, -15, -18, -22, -25, -28, -30, -30, -28, -25, -22, -20, -15, -12, -10, -8, -5, -3] },
  { x0: 1102, step: 5, heights: [-2, 0, 2, 3, 5, 7, 7, 8, 8, 10, 12, 13, 14, 16, 17, 12, 8, 5, 5, 4, 3, 3, 2, 0, 0, -1, -2, -2, -3, -3, -4, -8, -10, -15, -18, -23, -28, -27, -17, -13, -10, -10, -8, -7, -5, -4, -3, -2, 0, 3, 8, 12, 14, 10, 5, 2] },
];

const PRICES: [string, number][] = [
  ["1,069.00", 139], ["1,068.00", 180], ["1,067.00", 221], ["1,066.00", 263], ["1,065.00", 304],
  ["1,064.00", 346], ["1,063.00", 387], ["1,062.00", 429], ["1,061.00", 470], ["1,060.00", 512],
];

const GRID_X = Array.from({ length: 25 }, (_, i) => 172 + i * 50);

const TIMES = [
  "19:01:51", "20:38:32", "21:59:32", "19", "01:56:19", "02:24:35", "03:02:10", "03:10:38", "03:19:02", "03:30:20",
  "03:38:05", "03:47:53", "04:04:07", "04:16:44", "04:29:30", "04:51:44", "05:07:09", "05:18:56", "05:39:13",
  "06:07:56", "06:29:02", "06:56:16", "07:55:42", "09:21:47",
];

const CandleMarks: FC<{ data: Candle[]; ox: number; oy: number }> = ({ data, ox, oy }) => (
  <>
    {data.map(([zx, top, bot, wt, wb, kind]) => {
      const x = Math.round(ox + zx / 3);
      const bodyTop = Math.round(oy + top / 3);
      const bodyBot = Math.round(oy + bot / 3);
      return (
        <g key={zx}>
          <line
            x1={x + 0.5}
            x2={x + 0.5}
            y1={Math.round(oy + wt / 3)}
            y2={Math.round(oy + wb / 3)}
            stroke="#aaaaaa"
          />
          {kind === "d" ? (
            <line x1={x - 2} x2={x + 3} y1={bodyTop + 0.5} y2={bodyTop + 0.5} stroke="#aaaaaa" />
          ) : (
            <rect
              x={x - 1}
              y={bodyTop}
              width={4}
              height={bodyBot - bodyTop}
              fill={kind === "g" ? "#14e02c" : "#e4141c"}
            />
          )}
        </g>
      );
    })}
  </>
);

const polyStr = (pts: Pt[]) => pts.map((p) => p.join(",")).join(" ");

const GridLines: FC<{ ys: number[]; top: number; bottom: number }> = ({ ys, top, bottom }) => (
  <g stroke="#4a4a4a" strokeDasharray="1 3">
    {GRID_X.map((x) => (
      <line key={x} x1={x + 0.5} x2={x + 0.5} y1={top} y2={bottom} />
    ))}
    {ys.map((y) => (
      <line key={y} x1={170} x2={1386} y1={y + 0.5} y2={y + 0.5} />
    ))}
  </g>
);

const PriceChart: FC = () => (
  <PaneSvg viewBox="170 81 1270 430">
    <GridLines ys={PRICES.map((p) => p[1])} top={82} bottom={511} />
    <CandleMarks data={LEFT_CANDLES} ox={170} oy={360} />
    <CandleMarks data={MID_CANDLES} ox={790} oy={120} />
    <CandleMarks data={RIGHT_CANDLES} ox={1080} oy={110} />
    {HMA_SEGMENTS.map((s, i) => (
      <polyline key={i} points={polyStr(s.pts)} fill="none" stroke={s.color} />
    ))}
    <line x1={1386.5} x2={1386.5} y1={81} y2={511} stroke="#d81c1c" />
    {PRICES.map(([label, y]) => (
      <text key={label} x={1392} y={y + 4} fill="#dcdcdc">
        {label}
      </text>
    ))}
  </PaneSvg>
);

const Oscillator: FC<{
  top: number;
  height: number;
  zero: number;
  grid: number[];
  bars: Bars[];
  yellow: Pt[][];
  cyan: Pt[][];
  zeroColor: string;
  children?: ReactNode;
}> = ({ top, height, zero, grid, bars, yellow, cyan, zeroColor, children }) => (
  <PaneSvg viewBox={`170 ${top} 1270 ${height}`}>
    <GridLines ys={grid} top={top} bottom={top + height} />
    {bars.map((b) =>
      b.heights.map((h, i) =>
        h === 0 ? null : (
          <line
            key={`${b.x0}-${i}`}
            x1={b.x0 + i * b.step + 0.5}
            x2={b.x0 + i * b.step + 0.5}
            y1={zero}
            y2={zero - h}
            stroke="#c8141c"
          />
        ),
      ),
    )}
    <line x1={170} x2={1386} y1={zero + 0.5} y2={zero + 0.5} stroke={zeroColor} />
    {cyan.map((pts, i) => (
      <polyline key={i} points={polyStr(pts)} fill="none" stroke="#48d8d8" />
    ))}
    {yellow.map((pts, i) => (
      <polyline key={i} points={polyStr(pts)} fill="none" stroke="#f0f040" />
    ))}
    <line x1={1386.5} x2={1386.5} y1={top} y2={top + height} stroke="#d81c1c" />
    {children}
  </PaneSvg>
);

const Tag: FC<{ y: number; h: number; color: string; label: string }> = ({ y, h, color, label }) => (
  <>
    <polygon
      points={`1388,${y + h / 2} 1393,${y} 1440,${y} 1440,${y + h} 1393,${y + h}`}
      fill={color}
    />
    <text x={1395} y={y + h / 2 + 4} fill="#333">
      {label}
    </text>
  </>
);

const X_MARK = (
  <svg width="11" height="10" viewBox="0 0 11 10">
    <path d="M1 0.500l9 9M10 0.500l-9 9" stroke="#eee" strokeWidth="1.400" />
  </svg>
);

type DataEntry = { label: string; value?: string; color?: string; head?: boolean };

const GRAY = "#8a8a8a";

const DATA_ROWS: DataEntry[] = [
  { label: "Cursor:", head: true },
  { label: "Date", value: "7/19/2010" },
  { label: "Time", value: "06:27:22" },
  { label: "Price", value: "1,060.88" },
  { label: "ESU0:", head: true },
  { label: "O", value: "1,068.50", color: GRAY },
  { label: "H", value: "1,069.00", color: GRAY },
  { label: "L", value: "1,068.25", color: GRAY },
  { label: "C", value: "1,069.00", color: GRAY },
  { label: "Up Vol", value: "277", color: GRAY },
  { label: "Dn Vol", value: "376", color: GRAY },
  { label: "BarNumber", value: "18,949", color: GRAY },
  { label: "Strategy:", head: true },
  { label: "", value: "" },
  { label: "", value: "" },
  { label: "jtHMA:", head: true },
  { label: "jtHMA", value: "1,068.31", color: "#0a0a9c" },
  { label: "Zero", value: "N/A" },
  { label: "MACD:", head: true },
  { label: "MACD", value: "0.34", color: "#e8e84c" },
  { label: "MACDAvg", value: "0.11", color: "#48d0d8" },
  { label: "MACDDiff", value: "0.23", color: "#c01018" },
  { label: "ZeroLine", value: "0.00", color: "#0c6a0c" },
  { label: "jtHMA_MACD:", head: true },
  { label: "MACD", value: "0.27", color: "#e8e84c" },
  { label: "MACDAvg", value: "0.06", color: "#48d0d8" },
  { label: "MACDDiff", value: "0.22", color: "#c01018" },
  { label: "ZeroLine", value: "0.00", color: "#1cb81c" },
];

const PLOTS = [
  { name: "MACD", type: "Line", color: "#ffff00" },
  { name: "MACDAvg", type: "Line", color: "#00ffff" },
  { name: "MACDDiff", type: "Histogram", color: "#ff0000" },
  { name: "ZeroLine", type: "Line", color: "#00ff00" },
];

const App: FC = () => (
  <>
    <GlobalStyle />
    <Page>
      <TitleBar>
        <AppLogo viewBox="0 0 16 16">
          <path d="M7 2C3 4 2 8 4 13l-3-2M7 2L5 6" fill="none" stroke="#d8342c" strokeWidth="2.400" />
          <path d="M9 14c4-2 5-6 3-11l3 2M9 2l3 1" fill="none" stroke="#3c8ce0" strokeWidth="2.400" />
        </AppLogo>
        <TitleText>MultiCharts - 5Min - [ESU0 - 5 Minutes - Open E Cry]</TitleText>
        <WinButtons>
          <WinButton $w={24}>
            <svg width="10" height="4"><rect width="10" height="3" y="1" fill="#f0f0f0" /></svg>
          </WinButton>
          <WinButton $w={23}>
            <svg width="10" height="10">
              <path d="M3 .5h6.500v6.500M.5 3h6.500v6.500H.5z" fill="none" stroke="#eee" />
            </svg>
          </WinButton>
          <WinButton $w={43} $close>
            <svg width="11" height="9"><path d="M1 1l9 7M10 1L1 8" stroke="#fff" strokeWidth="2" /></svg>
          </WinButton>
        </WinButtons>
      </TitleBar>

      <MenuBar>
        <Slot $w={8}>
          <Grip />
        </Slot>
        <Slot $w={24}>
          <Icon name="win" />
        </Slot>
        <MenuItem $w={32}>File</MenuItem>
        <MenuItem $w={41}>View</MenuItem>
        <MenuItem $w={45}>Insert</MenuItem>
        <MenuItem $w={54}>Format</MenuItem>
        <MenuItem $w={60}>Window</MenuItem>
        <MenuItem $w={40}>Help</MenuItem>
        <MdiButtons>
          <MdiButton>
            <svg width="14" height="10">
              <path d="M.5 3h8.500v6.500H.5zM6 5l7-5M9.500 .5H13.500V4" fill="none" stroke="#777" />
            </svg>
          </MdiButton>
          <MdiButton>
            <svg width="8" height="3"><rect width="7" height="2" fill="#777" /></svg>
          </MdiButton>
          <MdiButton>
            <svg width="9" height="9">
              <path d="M2.500 2.500V.5h6v4.500H6.500M.5 3h5.500v5H.5z" fill="none" stroke="#777" />
            </svg>
          </MdiButton>
          <MdiButton>
            <svg width="9" height="8"><path d="M1 1l7 6M8 1L1 7" stroke="#777" strokeWidth="1.600" /></svg>
          </MdiButton>
        </MdiButtons>
      </MenuBar>

      <ToolBar $h={35} $start={10}>
        {TOP_TOOLS_A.map(renderTool)}
        <ComboBox $w={147}>
          Type a symbol/interval
          <DownArrow />
        </ComboBox>
        <More $w={20}>&raquo;</More>
        <Slot $w={16}>
          <Grip />
        </Slot>
        <ComboBox $w={128} $gray>
          As is (233 Tick Bars)
          <DownArrow />
        </ComboBox>
        <More $w={18}>&raquo;</More>
      </ToolBar>

      <Main>
        <DataWindow>
          <DataTitle>
            Data Window
            <DataClose viewBox="0 0 13 13">
              <path d="M1 1l11 11M12 1L1 12" stroke="#707070" strokeWidth="2" />
            </DataClose>
          </DataTitle>
          {DATA_ROWS.map((r, i) => (
            <DataRow key={i} $head={r.head}>
              <DataLabel $head={r.head}>{r.label}</DataLabel>
              {!r.head && <DataValue $color={r.color}>{r.value}</DataValue>}
            </DataRow>
          ))}
        </DataWindow>

        <ChartColumn>
          <Pane $h={430}>
            <PriceChart />
            <PaneHeader $top={5} $gap={5}>
              <SaBox>
                <SaText>SA</SaText>
                <SaDrop>
                  <MiniArrow />
                </SaDrop>
              </SaBox>
              <HeaderMuted>ESU0</HeaderMuted>
              <SmallBox>
                <MiniArrow />
              </SmallBox>
              <HeaderHidden>
                <span>E-Mini S&amp;P 233 Tick Bars</span>
                <HeaderTag>D</HeaderTag>
                <span>Trade: CME, Open E Cry, Futures</span>
                <span>7/20/2010 08:55:10</span>
                <span>L=1,077.75</span>
                <HeaderGreen>+13.75</HeaderGreen>
              </HeaderHidden>
              <HeaderRight>
                <HeaderGreen>+1.29%</HeaderGreen>
                <span>V=344,889</span>
                <span>Strategy</span>
                <StudyBox>{X_MARK}</StudyBox>
                <span>jtHMA</span>
              </HeaderRight>
            </PaneHeader>
          </Pane>
          <Divider />
          <Pane $h={140}>
            <Oscillator
              top={514}
              height={140}
              zero={603}
              grid={[566, 640]}
              bars={MACD_BARS}
              yellow={MACD_YELLOW}
              cyan={MACD_CYAN}
              zeroColor="#1c7a1c"
            >
              <text x={1392} y={569} fill="#dcdcdc">0.50</text>
              <text x={1392} y={644} fill="#dcdcdc">-0.50</text>
              <Tag y={568} h={9} color="#ffff00" label="0.41" />
              <Tag y={576} h={13} color="#00ffff" label="0.30" />
              <Tag y={590} h={9} color="#ff0000" label="0.11" />
              <Tag y={599} h={12} color="#008000" label="0.00" />
            </Oscillator>
            <PaneHeader $top={3}>
              <CloseBox>{X_MARK}</CloseBox>
              MACD
            </PaneHeader>
          </Pane>
          <Divider />
          <Pane $h={140}>
            <Oscillator
              top={657}
              height={140}
              zero={747}
              grid={[712, 782]}
              bars={JT_BARS}
              yellow={JT_YELLOW}
              cyan={JT_CYAN}
              zeroColor="#58d028"
            >
              <text x={1392} y={716} fill="#dcdcdc">0.50</text>
              <text x={1392} y={751} fill="#dcdcdc">0.00</text>
              <text x={1392} y={786} fill="#dcdcdc">-0.50</text>
            </Oscillator>
            <PaneHeader $top={3}>
              <CloseBox>{X_MARK}</CloseBox>
              jtHMA_MACD
            </PaneHeader>
          </Pane>
          <TimeAxis>
            {TIMES.map((t) => (
              <TimeLabel key={t} $pad={t === "19"}>
                {t}
              </TimeLabel>
            ))}
          </TimeAxis>
          <ScrollBar>
            <ScrollArrow />
            <ScrollThumb />
            <ScrollArrow $right />
          </ScrollBar>
          <TabStrip>
            <TabNav>
              <svg width="8" height="9"><path d="M0 0h1.500v9H0zM8 0v9L2 4.500z" fill="#888" /></svg>
              <svg width="6" height="9"><path d="M6 0v9L0 4.500z" fill="#888" /></svg>
              <svg width="6" height="9"><path d="M0 0v9l6-4.500z" fill="#888" /></svg>
              <svg width="8" height="9"><path d="M6.500 0H8v9H6.500zM0 0v9l6-4.500z" fill="#888" /></svg>
            </TabNav>
            <SheetTab $w={54} $active>
              <SheetTabText>233 T</SheetTabText>
            </SheetTab>
            <SheetTab $w={56}>
              <SheetTabText>30Min MP</SheetTabText>
            </SheetTab>
            <SheetTab $w={50}>
              <SheetTabText>30Min</SheetTabText>
            </SheetTab>
            <SheetTab $w={40}>
              <SheetTabText>5Min</SheetTabText>
            </SheetTab>
          </TabStrip>
        </ChartColumn>
      </Main>

      <ToolBar $h={26} $glow>
        {BOTTOM_TOOLS.map(renderTool)}
      </ToolBar>

      <StatusBar>
        <StatusReady>Ready</StatusReady>
        <StatusCell $w={1}>&nbsp;</StatusCell>
        <Authorized>Authorized</Authorized>
        <StatusCell $w={84}>0 q / 0 s</StatusCell>
        <StatusCell $w={64} $tight>08:55:11</StatusCell>
        <StatusCell $w={31}>&nbsp;</StatusCell>
      </StatusBar>

      <DialogFrame
        $left={720}
        $top={243}
        $w={362}
        $h={343}
        $title="linear-gradient(90deg, #5c5c5c, #8c8c8c 60%, #b0b0b0)"
      >
        <DialogTitle>
          <CaptionButtons>
            <CaptionButton $w={26}>?</CaptionButton>
            <CaptionButton $w={41}>X</CaptionButton>
          </CaptionButtons>
        </DialogTitle>
        <DialogClient>
          <StudyPanel>
            <StudyList>
              <StudyHead>Base Data #</StudyHead>
              <StudyRow>
                <StudyMark>#1</StudyMark>1
              </StudyRow>
              <StudyRow $hl>
                <StudyMark>#3</StudyMark>1
              </StudyRow>
              <StudyRow>
                <StudyMark>#2</StudyMark>1
              </StudyRow>
            </StudyList>
            <StudyButtons>
              <PushButton>Format...</PushButton>
              <PushButton>Remove</PushButton>
              <PushButton>Status</PushButton>
              <PushButton>Add...</PushButton>
              <PushButton>Open Script</PushButton>
            </StudyButtons>
          </StudyPanel>
          <FooterRow>
            <FooterButton>Close</FooterButton>
          </FooterRow>
        </DialogClient>
      </DialogFrame>

      <DialogFrame
        $left={283}
        $top={91}
        $w={505}
        $h={690}
        $title="linear-gradient(90deg, #d8d8d8, #d0d0d0 170px, #5c5c5c 240px, #606060 300px, #a8a8a8 100%)"
      >
        <DialogTitle>
          Format Study: jtHMA_MACD
          <CaptionButtons>
            <CaptionButton $w={25}>?</CaptionButton>
            <CaptionButton $w={43} $red>
              X
            </CaptionButton>
          </CaptionButtons>
        </DialogTitle>
        <DialogClient>
          <TabRow>
            <DialogTab $w={40}>Inputs</DialogTab>
            <DialogTab $w={44} $active>
              Style
            </DialogTab>
            <DialogTab $w={57}>Properties</DialogTab>
            <DialogTab $w={45}>Scaling</DialogTab>
            <DialogTab $w={79}>Volume Profile</DialogTab>
            <DialogTab $w={38}>Alerts</DialogTab>
          </TabRow>
          <TabPanel>
            <GroupHead>
              Style
              <GroupLine />
            </GroupHead>
            <PlotTable>
              <PlotRow $head>
                <PlotHead>Plot</PlotHead>
                <PlotHead>Type</PlotHead>
                <PlotHead>Color</PlotHead>
                <PlotHead>Style</PlotHead>
                <PlotHead>Weight</PlotHead>
                <PlotHead>Marker</PlotHead>
              </PlotRow>
              {PLOTS.map((p) => (
                <PlotRow key={p.name}>
                  <PlotCell $text>{p.name}</PlotCell>
                  <PlotCell $text>{p.type}</PlotCell>
                  <PlotCell>
                    <Swatch $color={p.color} />
                  </PlotCell>
                  <PlotCell>
                    <LineSample />
                  </PlotCell>
                  <PlotCell>
                    <LineSample />
                  </PlotCell>
                  <PlotCell>
                    <CheckBox $margin={28} />
                  </PlotCell>
                </PlotRow>
              ))}
            </PlotTable>
            <DefaultRow>
              <CheckBox />
              Use as default
            </DefaultRow>
          </TabPanel>
          <FooterRow>
            <FooterButton $primary>OK</FooterButton>
            <FooterButton>Cancel</FooterButton>
          </FooterRow>
        </DialogClient>
      </DialogFrame>

      <CursorSvg viewBox="0 0 13 20">
        <path d="M1 1v15l3.500-3.500 2.500 6 2.500-1-2.500-6h5z" fill="#fff" stroke="#111" />
      </CursorSvg>
    </Page>
  </>
);

export default App;
